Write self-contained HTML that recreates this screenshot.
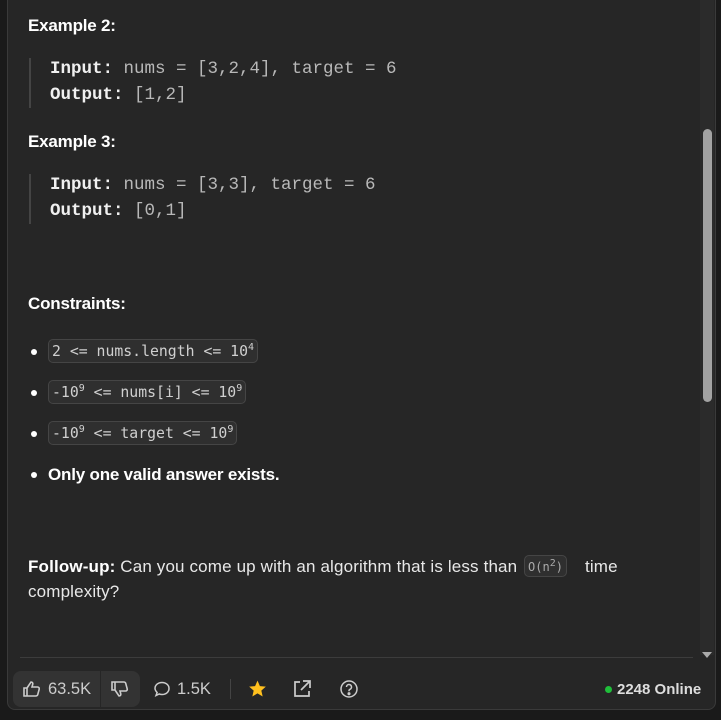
<!DOCTYPE html>
<html><head><meta charset="utf-8"><style>
body{margin:0;width:721px;height:720px;background:#1a1a1a;overflow:hidden;position:relative;font-family:"Liberation Sans",sans-serif;color:#eee}
.panel{position:absolute;left:7px;top:-10px;width:709px;height:720px;background:#262626;border:1px solid #3a3a3a;border-radius:8px;box-sizing:border-box}
.a{position:absolute;white-space:nowrap}
.h{font-weight:bold;font-size:17px;color:#fff;letter-spacing:-0.2px}
.m{font-family:"Liberation Mono","DejaVu Sans Mono",monospace;font-size:17.5px;color:#b8b8b8}
.m b{color:#f0f0f0}
.bq{position:absolute;left:29px;width:2px;background:#444}
.c{font-family:"DejaVu Sans Mono",monospace;font-size:14.8px;color:#d0d0d0;background:#2f2f2f;border:1px solid #454545;border-radius:5px;padding:2px 3px}
.c sup{font-size:10px}
.dot{position:absolute;left:31px;width:6px;height:6px;border-radius:3px;background:#fff}
.t{font-size:17px;color:#e8e8e8;letter-spacing:0.15px}
.ft{font-size:16.5px;color:#ccc}
</style></head><body>
<div class="panel"></div>
<div class="a" style="left:700px;top:0;width:14px;height:655px;background:#2b2b2b"></div>
<div class="a" style="left:703px;top:129px;width:9px;height:273px;background:#a3a3a3;border-radius:5px"></div>
<div class="a" style="left:702px;top:652px;width:0;height:0;border-left:5px solid transparent;border-right:5px solid transparent;border-top:6px solid #aaa"></div>

<div class="a h" style="left:28px;top:16px">Example 2:</div>
<div class="bq" style="top:58px;height:50px"></div>
<div class="a m" style="left:50px;top:59px"><b>Input:</b> nums = [3,2,4], target = 6</div>
<div class="a m" style="left:50px;top:85px"><b>Output:</b> [1,2]</div>

<div class="a h" style="left:28px;top:132px">Example 3:</div>
<div class="bq" style="top:174px;height:50px"></div>
<div class="a m" style="left:50px;top:175px"><b>Input:</b> nums = [3,3], target = 6</div>
<div class="a m" style="left:50px;top:201px"><b>Output:</b> [0,1]</div>

<div class="a h" style="left:28px;top:294px">Constraints:</div>
<div class="dot" style="top:349px"></div>
<div class="a c" style="left:48px;top:339px">2 &lt;= nums.length &lt;= 10<sup>4</sup></div>
<div class="dot" style="top:390px"></div>
<div class="a c" style="left:48px;top:380px">-10<sup>9</sup> &lt;= nums[i] &lt;= 10<sup>9</sup></div>
<div class="dot" style="top:431px"></div>
<div class="a c" style="left:48px;top:421px">-10<sup>9</sup> &lt;= target &lt;= 10<sup>9</sup></div>
<div class="dot" style="top:472px"></div>
<div class="a h" style="left:48px;top:465px">Only one valid answer exists.</div>

<div class="a t" style="left:28px;top:557px"><b style="color:#fff">Follow-up:</b> Can you come up with an algorithm that is less than</div>
<div class="a c" style="left:524px;top:555px;font-size:12px;color:#aaa">O(n<sup>2</sup>)</div>
<div class="a t" style="left:585px;top:557px">time</div>
<div class="a t" style="left:28px;top:582px">complexity?</div>

<div class="a" style="left:20px;top:657px;width:673px;height:1px;background:#3c3c3c"></div>

<div class="a" style="left:13px;top:671px;width:87px;height:36px;background:#333;border-radius:8px 0 0 8px"></div>
<div class="a" style="left:101px;top:671px;width:39px;height:36px;background:#333;border-radius:0 8px 8px 0"></div>
<svg class="a" style="left:22px;top:680px" width="20" height="18" viewBox="0 0 20 18" fill="none" stroke="#ccc" stroke-width="1.6"><path d="M2 8h3v8H2zM5 8l4-6c1.5 0 2 1 1.7 2.5L10 7h5.5c1.2 0 2 1 1.7 2.2l-1.5 5.5c-.3 1-1 1.3-2 1.3H5"/></svg>
<div class="a ft" style="left:48px;top:680px">63.5K</div>
<svg class="a" style="left:110px;top:680px" width="20" height="18" viewBox="0 0 20 18" fill="none" stroke="#ccc" stroke-width="1.6"><path d="M2 2h3v8H2zM5 10l4 6c1.5 0 2-1 1.7-2.5L10 11h5.5c1.2 0 2-1 1.7-2.2l-1.5-5.5c-.3-1-1-1.3-2-1.3H5"/></svg>
<svg class="a" style="left:153px;top:680px" width="18" height="18" viewBox="0 0 18 18" fill="none" stroke="#ccc" stroke-width="1.5"><path d="M9 2.5c4 0 7 2.6 7 6s-3 6-7 6c-1 0-2-.2-2.8-.5L3 15.5l1.1-3C3 11.3 2 10 2 8.5c0-3.4 3-6 7-6z"/></svg>
<div class="a ft" style="left:177px;top:680px">1.5K</div>
<div class="a" style="left:230px;top:679px;width:1px;height:20px;background:#444"></div>
<svg class="a" style="left:247px;top:679px" width="21" height="20" viewBox="0 0 24 24"><path fill="#ffc01e" d="M12 2l2.9 6.6 7.1.6-5.4 4.7 1.6 7.1L12 17.3 5.8 21l1.6-7.1L2 9.2l7.1-.6z"/></svg>
<svg class="a" style="left:292px;top:679px" width="20" height="20" viewBox="0 0 20 20" fill="none" stroke="#ccc" stroke-width="1.7"><path d="M8 3H3v14h14v-5M11 2h7v7M18 2l-9 9"/></svg>
<svg class="a" style="left:339px;top:679px" width="20" height="20" viewBox="0 0 20 20" fill="none" stroke="#ccc" stroke-width="1.5"><circle cx="10" cy="10" r="8"/><path d="M7.5 8a2.5 2.5 0 1 1 3.5 2.3c-.7.3-1 .8-1 1.5v.5"/><circle cx="10" cy="14.7" r=".8" fill="#ccc"/></svg>
<div class="a" style="left:605px;top:686px;width:7px;height:7px;border-radius:4px;background:#1fbf3a"></div>
<div class="a" style="left:617px;top:681px;font-size:15px;font-weight:bold;color:#ddd">2248 Online</div>
</body></html>
